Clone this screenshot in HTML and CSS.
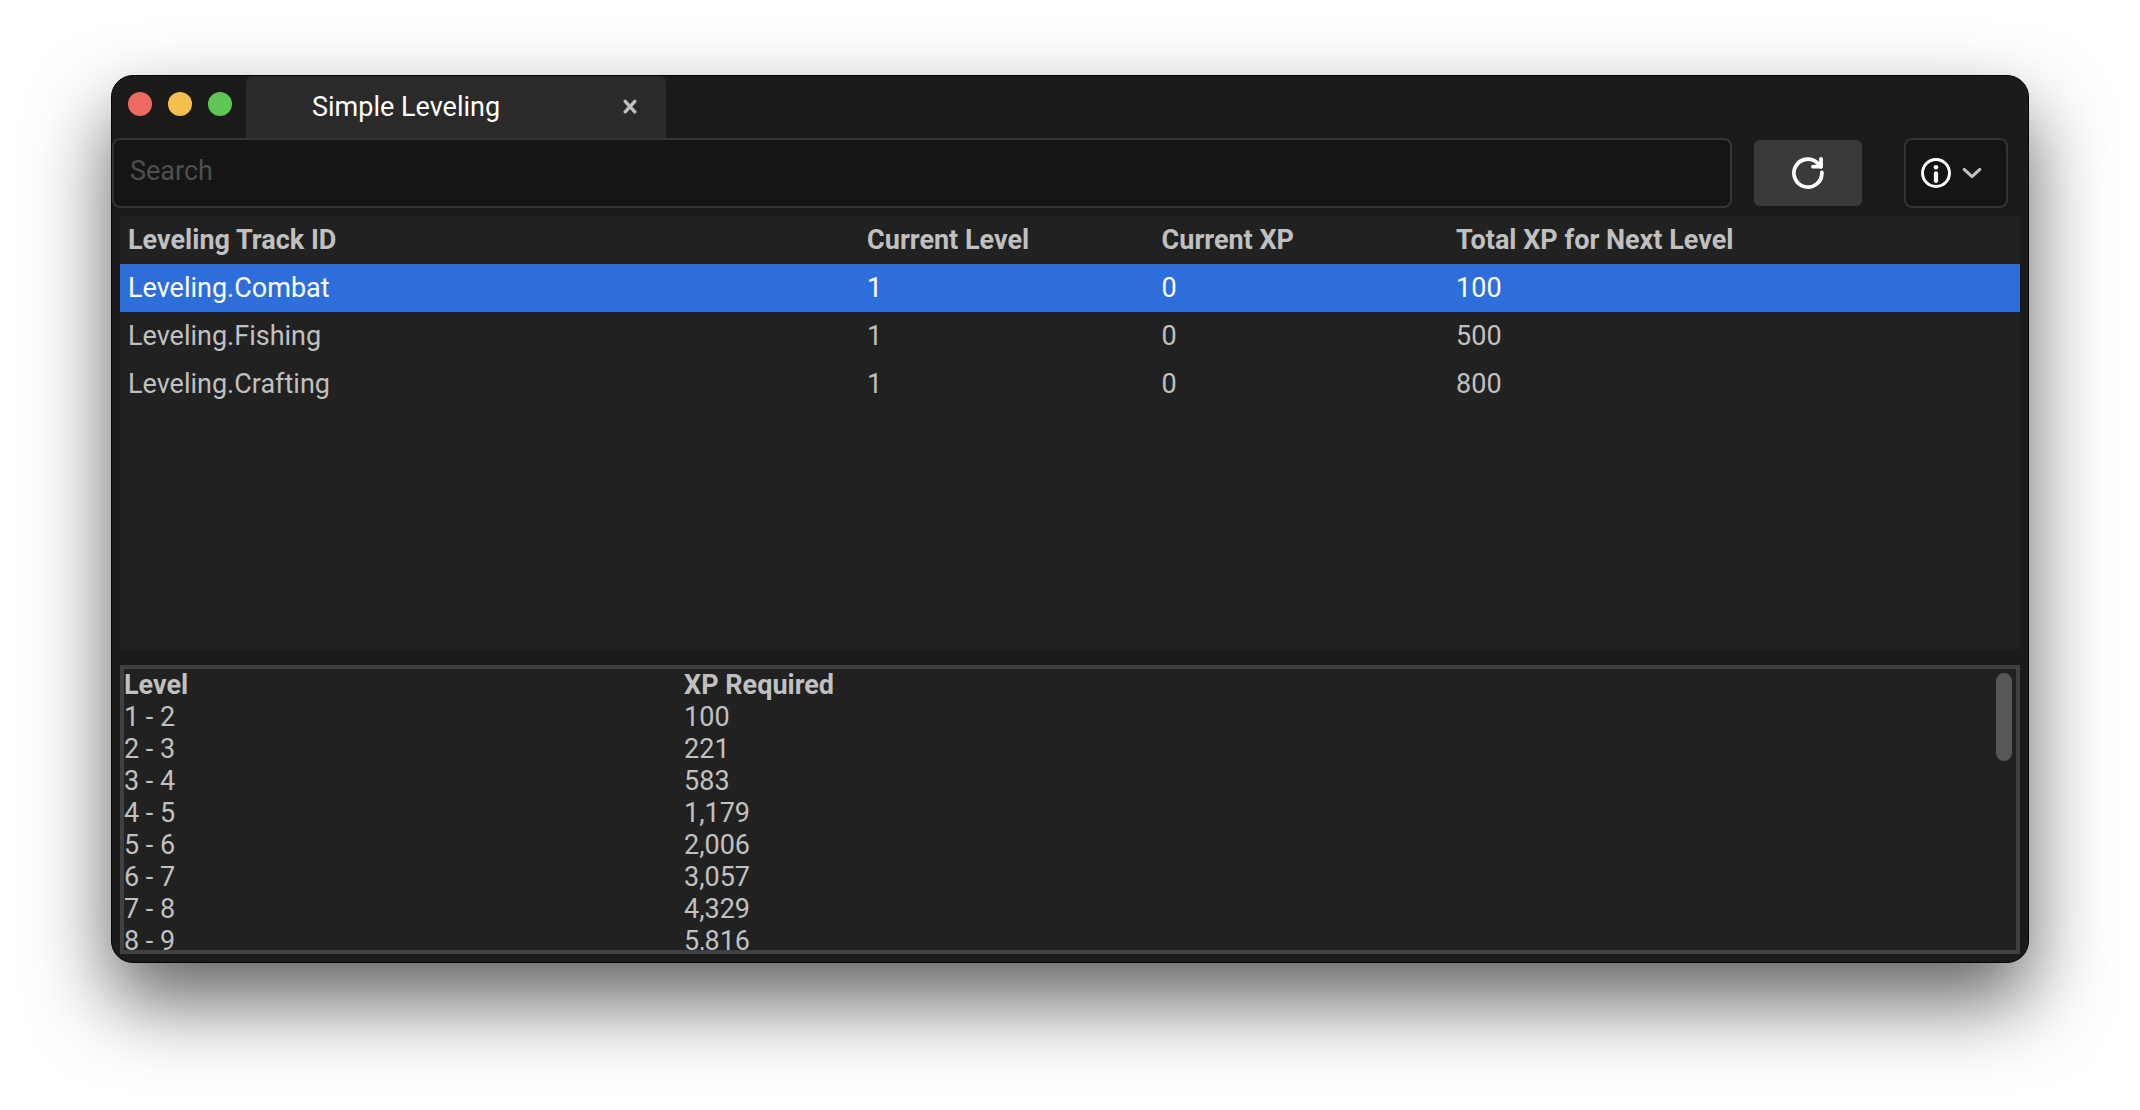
FILE: index.html
```html
<!DOCTYPE html>
<html lang="en">
<head>
<meta charset="utf-8">
<title>Simple Leveling</title>
<link rel="stylesheet" href="styles.css">
</head>
<body>
<main class="window">
  <header class="titlebar">
    <div class="lights">
      <button class="light light-close" type="button" aria-label="Close window"></button>
      <button class="light light-minimize" type="button" aria-label="Minimize window"></button>
      <button class="light light-zoom" type="button" aria-label="Zoom window"></button>
    </div>
    <div class="tab">
      <span class="tab-title">Simple Leveling</span>
      <button class="tab-close" type="button" aria-label="Close tab">
        <svg width="16" height="16" viewBox="0 0 16 16" fill="none" stroke="currentColor" stroke-width="3.4" stroke-linecap="round"><path d="M3.2 2.4l9.6 10.4M12.8 2.4L3.2 12.8"/></svg>
      </button>
    </div>
  </header>

  <div class="toolbar">
    <input class="search" type="search" placeholder="Search" aria-label="Search">
    <button class="refresh" type="button" aria-label="Refresh">
      <svg width="36" height="36" viewBox="0 0 36 36" fill="none" stroke="currentColor" stroke-width="3.8" stroke-linecap="round" stroke-linejoin="round"><path d="M31.9 17.5A14 14 0 1 1 27.8 8.2L30.8 11.7"/><path d="M31 4v7.7h-8"/></svg>
    </button>
    <button class="info" type="button" aria-label="Information" aria-haspopup="menu">
      <svg width="30" height="30" viewBox="0 0 30 30"><circle cx="15" cy="15" r="13.5" fill="none" stroke="currentColor" stroke-width="3"/><circle cx="15" cy="9.3" r="2.3" fill="currentColor"/><path d="M15 15.4v7.6" stroke="currentColor" stroke-width="4.2" stroke-linecap="round"/></svg>
      <svg class="chevron" width="20" height="12" viewBox="0 0 20 12" fill="none" stroke="currentColor" stroke-width="3" stroke-linecap="round" stroke-linejoin="round"><path d="M2.2 2.3L10 9.7l7.8-7.4"/></svg>
    </button>
  </div>

  <div class="panes">
    <section class="tracks">
      <table class="tracks-table">
        <colgroup><col class="col-id"><col class="col-level"><col class="col-xp"><col></colgroup>
        <thead>
          <tr><th>Leveling Track ID</th><th>Current Level</th><th>Current XP</th><th>Total XP for Next Level</th></tr>
        </thead>
        <tbody>
          <tr class="selected"><td>Leveling.Combat</td><td>1</td><td>0</td><td>100</td></tr>
          <tr><td>Leveling.Fishing</td><td>1</td><td>0</td><td>500</td></tr>
          <tr><td>Leveling.Crafting</td><td>1</td><td>0</td><td>800</td></tr>
        </tbody>
      </table>
    </section>

    <section class="levels">
      <table class="levels-table">
        <colgroup><col class="col-range"><col></colgroup>
        <thead>
          <tr><th>Level</th><th>XP Required</th></tr>
        </thead>
        <tbody>
          <tr><td>1 - 2</td><td>100</td></tr>
          <tr><td>2 - 3</td><td>221</td></tr>
          <tr><td>3 - 4</td><td>583</td></tr>
          <tr><td>4 - 5</td><td>1,179</td></tr>
          <tr><td>5 - 6</td><td>2,006</td></tr>
          <tr><td>6 - 7</td><td>3,057</td></tr>
          <tr><td>7 - 8</td><td>4,329</td></tr>
          <tr><td>8 - 9</td><td>5,816</td></tr>
        </tbody>
      </table>
      <div class="scroll-thumb"></div>
    </section>
  </div>
</main>
</body>
</html>
```
FILE: styles.css
```css
* {
  box-sizing: border-box;
}

body {
  margin: 0;
  height: 100vh;
  padding: 75px 111px 147px;
  display: flex;
  background: #fff;
  color: #c0c0c0;
  font: 27px/32px Roboto, sans-serif;
}

button,
input {
  margin: 0;
  padding: 0;
  border: 0;
  font: inherit;
  color: inherit;
  background: none;
}

svg {
  display: block;
}

.window {
  flex: 1;
  min-width: 0;
  display: flex;
  flex-direction: column;
  overflow: hidden;
  border: 1px solid #050505;
  border-radius: 22px;
  background: #1b1b1b;
  box-shadow: 0 38px 80px rgba(0, 0, 0, 0.62);
}

/* Title bar */
.titlebar {
  display: flex;
  height: 62px;
  flex: none;
}

.lights {
  display: flex;
  align-items: center;
  gap: 16px;
  padding: 0 14px 6px 16px;
}

.light {
  width: 24px;
  height: 24px;
  border-radius: 50%;
}

.light-close {
  background: #ed6a5e;
}

.light-minimize {
  background: #f5bf4f;
}

.light-zoom {
  background: #61c554;
}

.tab {
  display: flex;
  align-items: center;
  justify-content: space-between;
  width: 420px;
  padding: 0 28px 0 66px;
  border-radius: 6px 6px 0 0;
  background: #2a2a2a;
}

.tab-title {
  color: #fff;
}

/* Toolbar */
.toolbar {
  display: flex;
  align-items: center;
  flex: none;
  padding: 0 20px 0 0;
}

.search {
  flex: 1;
  min-width: 0;
  height: 70px;
  padding: 0 16px 4px;
  border: 2px solid #353535;
  border-radius: 8px;
  background: #151515;
  appearance: none;
  outline: none;
}

.search::placeholder {
  color: #4f4f4f;
  opacity: 1;
}

.refresh {
  display: flex;
  align-items: center;
  justify-content: center;
  width: 108px;
  height: 66px;
  margin: 0 42px 0 22px;
  border-radius: 6px;
  background: #3a3a3a;
  color: #fff;
}

.info {
  display: flex;
  align-items: center;
  gap: 11px;
  height: 70px;
  padding: 0 24px 0 15px;
  border: 2px solid #353535;
  border-radius: 8px;
  background: #151515;
  color: #fff;
}

.chevron {
  color: #c0c0c0;
}

/* Stacked panes */
.panes {
  flex: 1;
  min-height: 0;
  display: grid;
  grid-template-rows: minmax(0, 3fr) minmax(0, 2fr);
  gap: 16px;
  padding: 8px;
}

.tracks,
.levels {
  overflow: hidden;
  background: #212121;
}

.levels {
  position: relative;
  border: 4px solid #404040;
}

table {
  width: 100%;
  table-layout: fixed;
  border-collapse: collapse;
}

th,
td {
  padding: 0;
  text-align: left;
  white-space: nowrap;
}

th {
  font-weight: 700;
}

.tracks-table th,
.tracks-table td {
  height: 48px;
  padding: 0 8px;
}

.col-id {
  width: 38.9%;
}

.col-level,
.col-xp {
  width: 15.5%;
}

.selected {
  background: #2e6edb;
  color: #fff;
}

.levels-table th,
.levels-table td {
  height: 32px;
}

.col-range {
  width: 29.6%;
}

.scroll-thumb {
  position: absolute;
  top: 4px;
  right: 4px;
  width: 16px;
  height: 88px;
  border-radius: 8px;
  background: #575757;
}
```
